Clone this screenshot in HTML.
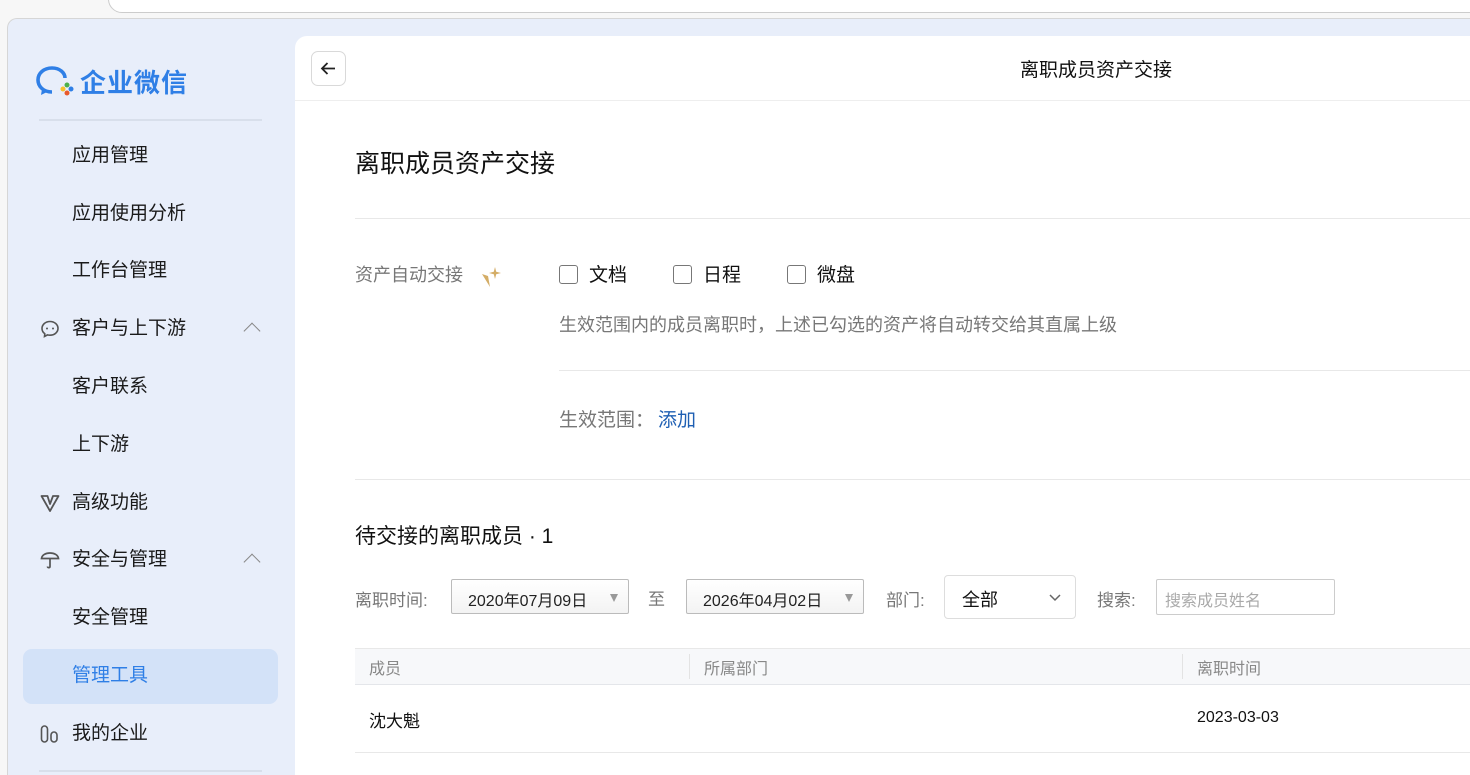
<!DOCTYPE html>
<html><head><meta charset="utf-8"><style>
*{box-sizing:border-box;margin:0;padding:0}
html,body{width:1470px;height:775px;overflow:hidden}
body{background:#f7f7f7;font-family:"Liberation Sans","Noto Sans CJK SC",sans-serif;position:relative}
.url{position:absolute;left:108px;top:-20px;width:1400px;height:33px;background:#fff;border:1px solid #ccc;border-radius:14px}
.frame{position:absolute;left:7px;top:18px;width:1470px;height:757px;background:#e8eefa;border:1px solid #d6d6d6;border-bottom:none;border-radius:10px 0 0 0}
.side{position:absolute;left:0;top:0;width:295px}
.logo{position:absolute;left:36px;top:63px;display:flex;align-items:center;font-size:26px;font-weight:bold;color:#2f7fe6;letter-spacing:1px}
.hr{position:absolute;left:39px;width:223px;height:2px;background:#d8dfeb}
.it{position:absolute;left:72px;font-size:19px;color:#1a1a1a;line-height:24px}
.ic{position:absolute;left:40px}
.chev{position:absolute;left:246px;width:12px;height:12px;border-left:1.6px solid #888;border-top:1.6px solid #888;transform:rotate(45deg)}
.sel{position:absolute;left:23px;top:649px;width:255px;height:55px;background:#d3e2f8;border-radius:9px}
.main{position:absolute;left:295px;top:36px;width:1175px;height:739px;background:#fff;border-top-left-radius:12px}
.t{position:absolute;white-space:nowrap}
.back{position:absolute;left:16px;top:15px;width:35px;height:35px;border:1px solid #d9d9d9;border-radius:7px}
.cb{display:inline-block;width:19px;height:19px;border:1.5px solid #777;border-radius:3px;vertical-align:-3px;margin-right:11px}
.sel2{position:absolute;height:35px;border:1px solid #bbb;border-radius:2px;background:linear-gradient(#fff,#f3f3f3);font-size:16px;color:#222;padding:7px 16px}
.tri{position:absolute;right:10px;top:14px;border-left:4px solid transparent;border-right:4px solid transparent;border-top:8px solid #999}
</style></head><body>
<div class="url"></div>
<div class="frame"></div>
<div class="side">
 <div class="logo">
  <svg width="40" height="34" viewBox="0 0 40 34"><path d="M16 27 C7 27 2 21 2 15 C2 8 8 3 16 3 C24 3 29 8 29 13" fill="none" stroke="#2f7fe6" stroke-width="3.6"/><path d="M6 24 L5 30 L11 27" fill="#2f7fe6"/><circle cx="31" cy="20" r="2.5" fill="#4cb04c"/><circle cx="27" cy="24" r="2.5" fill="#f5c02c"/><circle cx="31" cy="28" r="2.5" fill="#e85a2c"/><circle cx="35" cy="24" r="2.5" fill="#2f7fe6"/></svg>
  <span style="margin-left:4px">企业微信</span></div>
 <div class="hr" style="top:119px"></div>
 <div class="it" style="top:144px">应用管理</div>
 <div class="it" style="top:202px">应用使用分析</div>
 <div class="it" style="top:259px">工作台管理</div>
 <svg class="ic" style="top:319px" width="20" height="20" viewBox="0 0 20 20"><path d="M10 2.5C5.5 2.5 2 5.6 2 9.5c0 2.2 1.1 4 2.8 5.3L4.5 17.5l3-1.6c.8.2 1.6.3 2.5.3 4.5 0 8-3 8-6.8S14.5 2.5 10 2.5z" fill="none" stroke="#555" stroke-width="1.6"/><circle cx="7" cy="9.5" r="1" fill="#555"/><circle cx="13" cy="9.5" r="1" fill="#555"/></svg>
 <div class="it" style="top:317px">客户与上下游</div><div class="chev" style="top:325px"></div>
 <div class="it" style="top:375px">客户联系</div>
 <div class="it" style="top:433px">上下游</div>
 <svg class="ic" style="top:493px" width="20" height="20" viewBox="0 0 20 20"><path d="M1.5 3h6l2.5 8 3-8h5.5L10 18z" fill="none" stroke="#555" stroke-width="1.8" stroke-linejoin="round"/></svg>
 <div class="it" style="top:491px">高级功能</div>
 <svg class="ic" style="top:550px" width="20" height="20" viewBox="0 0 20 20"><path d="M1.5 8.5C2 5 5.5 3 10 3s8 2 8.5 5.5z" fill="none" stroke="#555" stroke-width="1.7"/><path d="M10 8.5v8c0 1.5-2.5 1.5-2.5 0" fill="none" stroke="#555" stroke-width="1.7"/></svg>
 <div class="it" style="top:548px">安全与管理</div><div class="chev" style="top:556px"></div>
 <div class="it" style="top:606px">安全管理</div>
 <div class="sel"></div>
 <div class="it" style="top:664px;color:#2f7fe6">管理工具</div>
 <svg class="ic" style="top:724px" width="20" height="20" viewBox="0 0 20 20"><rect x="1.5" y="2" width="6" height="16" rx="3" fill="none" stroke="#555" stroke-width="1.6"/><rect x="11" y="8" width="6" height="10" rx="3" fill="none" stroke="#555" stroke-width="1.6"/></svg>
 <div class="it" style="top:722px">我的企业</div>
 <div class="hr" style="top:770px"></div>
</div>
<div class="main">
 <div class="back"><svg width="33" height="33" viewBox="0 0 33 33"><path d="M23 16.5H10M15.5 11l-5.5 5.5 5.5 5.5" fill="none" stroke="#222" stroke-width="1.8"/></svg></div>
 <div class="t" style="left:725px;top:19px;font-size:19px;color:#111">离职成员资产交接</div>
 <div style="position:absolute;left:0;top:64px;width:1175px;height:1px;background:#eee"></div>
 <div class="t" style="left:60px;top:108px;font-size:25px;color:#111">离职成员资产交接</div>
 <div style="position:absolute;left:60px;top:182px;width:1115px;height:1px;background:#e8e8e8"></div>
 <div class="t" style="left:60px;top:225px;font-size:18px;color:#777">资产自动交接</div>
 <svg style="position:absolute;left:186px;top:229px" width="22" height="24" viewBox="0 0 22 24"><path d="M1 9l6 2 2 11z" fill="#d4ad66"/><path d="M9 22l4-12z" fill="#c79b55"/><path d="M14 2l1.2 4.8L20 8l-4.8 1.2L14 14l-1.2-4.8L8 8l4.8-1.2z" fill="#d4ad66"/></svg>
 <div class="t" style="left:264px;top:224px;font-size:19px;color:#111"><span class="cb"></span>文档<span style="display:inline-block;width:46px"></span><span class="cb"></span>日程<span style="display:inline-block;width:46px"></span><span class="cb"></span>微盘</div>
 <div class="t" style="left:264px;top:275px;font-size:18px;color:#777">生效范围内的成员离职时，上述已勾选的资产将自动转交给其直属上级</div>
 <div style="position:absolute;left:264px;top:334px;width:911px;height:1px;background:#e8e8e8"></div>
 <div class="t" style="left:264px;top:369px;font-size:19px;color:#777">生效范围：<span style="color:#1e5fb3;margin-left:4px">添加</span></div>
 <div style="position:absolute;left:60px;top:443px;width:1115px;height:1px;background:#e8e8e8"></div>
 <div class="t" style="left:60px;top:484px;font-size:21px;color:#111">待交接的离职成员 · 1</div>
 <div class="t" style="left:60px;top:550px;font-size:17px;color:#777">离职时间:</div>
 <div class="sel2" style="left:156px;top:543px;width:178px">2020年07月09日<div class="tri"></div></div>
 <div class="t" style="left:353px;top:549px;font-size:17px;color:#777">至</div>
 <div class="sel2" style="left:391px;top:543px;width:178px">2026年04月02日<div class="tri"></div></div>
 <div class="t" style="left:591px;top:550px;font-size:17px;color:#777">部门:</div>
 <div style="position:absolute;left:649px;top:539px;width:132px;height:44px;border:1px solid #ddd;border-radius:4px;font-size:18px;color:#111;padding:10px 17px">全部<svg style="position:absolute;right:13px;top:17px" width="14" height="10" viewBox="0 0 14 10"><path d="M2 2l5 5 5-5" fill="none" stroke="#666" stroke-width="1.5"/></svg></div>
 <div class="t" style="left:802px;top:550px;font-size:17px;color:#777">搜索:</div>
 <div style="position:absolute;left:861px;top:543px;width:179px;height:36px;border:1px solid #ccc;border-radius:2px;font-size:16px;color:#aaa;padding:7px 8px">搜索成员姓名</div>
 <div style="position:absolute;left:60px;top:612px;width:1115px;height:37px;background:#f7f8fa;border-top:1px solid #e8e8e8;border-bottom:1px solid #e4e6ea"></div>
 <div style="position:absolute;left:394px;top:618px;width:1px;height:25px;background:#e3e3e3"></div>
 <div style="position:absolute;left:887px;top:618px;width:1px;height:25px;background:#e3e3e3"></div>
 <div class="t" style="left:74px;top:619px;font-size:16px;color:#888">成员</div>
 <div class="t" style="left:409px;top:619px;font-size:16px;color:#888">所属部门</div>
 <div class="t" style="left:902px;top:619px;font-size:16px;color:#888">离职时间</div>
 <div class="t" style="left:74px;top:671px;font-size:17px;color:#111">沈大魁</div>
 <div class="t" style="left:902px;top:673px;font-size:16px;color:#111">2023-03-03</div>
 <div style="position:absolute;left:60px;top:716px;width:1115px;height:1px;background:#e8e8e8"></div>
</div>
</body></html>
